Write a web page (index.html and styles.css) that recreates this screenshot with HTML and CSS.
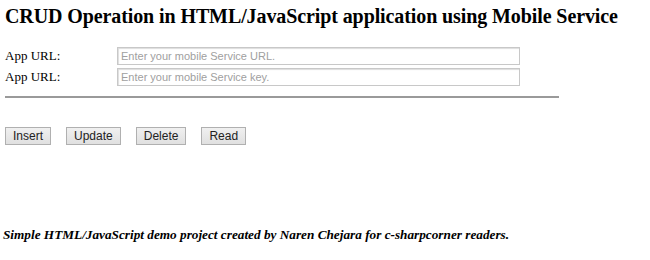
FILE: index.html
```html
<!DOCTYPE html>
<html lang="en">

<head>
    <meta charset="UTF-8">
    <meta name="viewport" content="width=device-width, initial-scale=1.0">
    <title>CRUD Operation</title>
    <link rel="stylesheet" href="styles.css">
</head>

<body>

    <h1 class="title">CRUD Operation in HTML/JavaScript application using Mobile Service</h1>

    <div class="form">
        <div class="row">
            <label class="lbl">App URL:</label>
            <input type="text" class="field" placeholder="Enter your mobile Service URL.">
        </div>
        <div class="row">
            <label class="lbl">App URL:</label>
            <input type="text" class="field" placeholder="Enter your mobile Service key.">
        </div>
    </div>

    <hr class="line">

    <div class="buttons">
        <button class="btn">Insert</button>
        <button class="btn">Update</button>
        <button class="btn">Delete</button>
        <button class="btn">Read</button>
    </div>

    <p class="footer">Simple HTML/JavaScript demo project created by Naren Chejara for c-sharpcorner readers.</p>

</body>

</html>
```

FILE: styles.css
```css
* {
    margin: 0;
    padding: 0;
    box-sizing: border-box;
}

body {
    font-family: 'Liberation Serif', 'Times New Roman', serif;
    color: #000;
    background: #fff;
    width: 650px;
    height: 260px;
    overflow: hidden;
}

.title {
    font-size: 20px;
    font-weight: bold;
    letter-spacing: -0.1px;
    padding: 5px 0 0 5px;
    height: 47px;
    white-space: nowrap;
}

.form {
    display: flex;
    flex-direction: column;
    gap: 3px;
    padding-left: 5px;
}

.row {
    display: flex;
    align-items: center;
}

.lbl {
    width: 112px;
    font-size: 13px;
}

.field {
    width: 403px;
    height: 18px;
    border: 1px solid #c8c8c8;
    box-shadow: inset 1px 1px 1px #ddd;
    font-family: 'Liberation Sans', Arial, sans-serif;
    font-size: 11px;
    padding: 0 3px;
    outline: none;
}

.field::placeholder {
    color: #a0a0a0;
}

.line {
    border: none;
    height: 2px;
    background: #9a9a9a;
    width: 554px;
    margin: 10px 0 0 5px;
}

.buttons {
    display: flex;
    gap: 15px;
    padding: 29px 0 0 5px;
}

.btn {
    height: 18px;
    padding: 0 7px;
    font-family: 'Liberation Sans', Arial, sans-serif;
    font-size: 12px;
    color: #222;
    background: linear-gradient(#f0f0f0, #e0e0e0);
    border: 1px solid #b0b0b0;
}

.footer {
    font-size: 13.25px;
    font-weight: bold;
    font-style: italic;
    padding: 82px 0 0 3px;
    white-space: nowrap;
}
```
